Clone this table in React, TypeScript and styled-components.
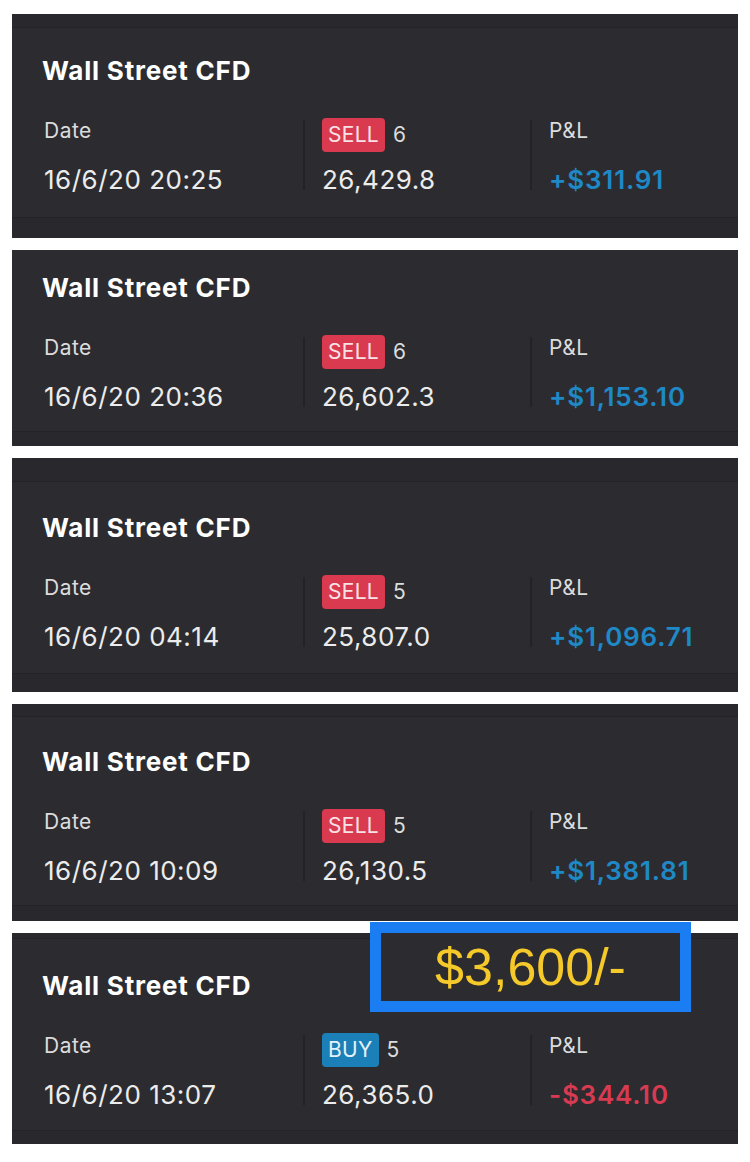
import React from "react";
import styled, { createGlobalStyle } from "styled-components";

const GlobalStyle = createGlobalStyle`
  html, body {
    margin: 0;
    padding: 0;
    background: #ffffff;
  }
  body {
    font-family: Inter, "Noto Sans", "Liberation Sans", sans-serif;
    -webkit-font-smoothing: antialiased;
  }
`;

type Trade = {
  height: number;
  topStrip: number;
  bottomStrip: number;
  titleGap: number;
  date: string;
  side: "SELL" | "BUY";
  qty: number;
  price: string;
  pnl: string;
};

const trades: Trade[] = [
  { height: 224, topStrip: 13, bottomStrip: 20, titleGap: 28, date: "16/6/20 20:25", side: "SELL", qty: 6, price: "26,429.8", pnl: "+$311.91" },
  { height: 196, topStrip: 0, bottomStrip: 14, titleGap: 23, date: "16/6/20 20:36", side: "SELL", qty: 6, price: "26,602.3", pnl: "+$1,153.10" },
  { height: 234, topStrip: 23, bottomStrip: 18, titleGap: 31, date: "16/6/20 04:14", side: "SELL", qty: 5, price: "25,807.0", pnl: "+$1,096.71" },
  { height: 217, topStrip: 12, bottomStrip: 15, titleGap: 30, date: "16/6/20 10:09", side: "SELL", qty: 5, price: "26,130.5", pnl: "+$1,381.81" },
  { height: 211, topStrip: 5, bottomStrip: 13, titleGap: 32, date: "16/6/20 13:07", side: "BUY", qty: 5, price: "26,365.0", pnl: "-$344.10" },
];

const Page = styled.div`
  position: relative;
  width: 726px;
  padding: 14px 12px 18px;
  display: flex;
  flex-direction: column;
  gap: 12px;
`;

const Card = styled.div<{ $h: number }>`
  height: ${(p) => p.$h}px;
  background: #2c2c30;
  display: flex;
  flex-direction: column;
`;

const TopStrip = styled.div<{ $h: number }>`
  height: ${(p) => p.$h}px;
  background: #29292d;
  border-bottom: ${(p) => (p.$h > 0 ? "1px solid #242427" : "none")};
  flex-shrink: 0;
`;

const Body = styled.div<{ $gap: number }>`
  flex: 1;
  padding: ${(p) => p.$gap}px 0 0 30px;
`;

const BottomStrip = styled.div<{ $h: number }>`
  height: ${(p) => p.$h}px;
  background: #29292d;
  border-top: 1px solid #242427;
  flex-shrink: 0;
`;

const Title = styled.div`
  color: #ffffff;
  font-size: 26px;
  font-weight: 700;
  line-height: 30px;
  letter-spacing: 0.8px;
`;

const Grid = styled.div`
  margin-top: 28px;
  display: grid;
  grid-template-columns: 261px 227px 1fr;
`;

const Col = styled.div<{ $divider?: boolean }>`
  position: relative;
  padding-left: ${(p) => (p.$divider ? "19px" : "2px")};

  &::before {
    content: "";
    display: ${(p) => (p.$divider ? "block" : "none")};
    position: absolute;
    left: 0;
    top: 6px;
    bottom: 5px;
    width: 2px;
    background: #232326;
  }
`;

const Head = styled.div<{ $shift?: number }>`
  height: 34px;
  display: flex;
  align-items: center;
  gap: 8px;
  margin-top: ${(p) => p.$shift || 0}px;
  margin-bottom: ${(p) => -(p.$shift || 0)}px;
  color: #dcdcdc;
  font-size: 21px;
  line-height: 24px;
  letter-spacing: 0.5px;
`;

const Badge = styled.span<{ $side: "SELL" | "BUY" }>`
  display: inline-flex;
  align-items: center;
  height: 34px;
  padding: 0 6px;
  border-radius: 4px;
  background: ${(p) => (p.$side === "SELL" ? "#d93a50" : "#1b80b8")};
  color: ${(p) => (p.$side === "SELL" ? "#f9e2e6" : "#e3f1f9")};
  font-size: 21px;
  letter-spacing: 0.3px;
`;

const Value = styled.div<{ $tone?: "up" | "down" }>`
  margin-top: 17px;
  font-size: 26px;
  line-height: 30px;
  letter-spacing: ${(p) => (p.$tone ? "0.8px" : "0.5px")};
  font-weight: ${(p) => (p.$tone ? 600 : 400)};
  color: ${(p) => (p.$tone === "up" ? "#1e89c6" : p.$tone === "down" ? "#d83a52" : "#ececec")};
`;

const Callout = styled.div`
  position: absolute;
  left: 370px;
  top: 922px;
  width: 321px;
  height: 90px;
  box-sizing: border-box;
  border: 11px solid #1a7ef2;
  background: #2c2c30;
  display: flex;
  align-items: center;
  justify-content: center;
  color: #f6c92a;
  font-family: "Liberation Sans", Arial, sans-serif;
  font-size: 52px;
  line-height: 1;
`;

export default function App() {
  return (
    <>
      <GlobalStyle />
      <Page>
        {trades.map((t, i) => (
          <Card key={i} $h={t.height}>
            <TopStrip $h={t.topStrip} />
            <Body $gap={t.titleGap}>
              <Title>Wall Street CFD</Title>
              <Grid>
                <Col>
                  <Head>Date</Head>
                  <Value>{t.date}</Value>
                </Col>
                <Col $divider>
                  <Head $shift={4}>
                    <Badge $side={t.side}>{t.side}</Badge>
                    {t.qty}
                  </Head>
                  <Value>{t.price}</Value>
                </Col>
                <Col $divider>
                  <Head>P&amp;L</Head>
                  <Value $tone={t.pnl.startsWith("-") ? "down" : "up"}>{t.pnl}</Value>
                </Col>
              </Grid>
            </Body>
            <BottomStrip $h={t.bottomStrip} />
          </Card>
        ))}
        <Callout>$3,600/-</Callout>
      </Page>
    </>
  );
}
